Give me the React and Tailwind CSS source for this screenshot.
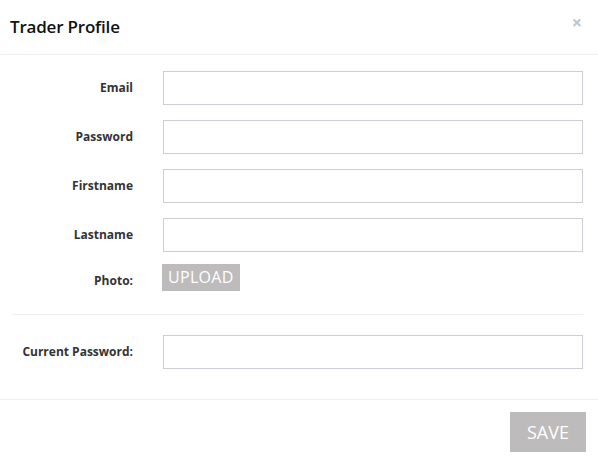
import React from "react";

const font = { fontFamily: '"Open Sans", "Liberation Sans", sans-serif' };

function Row({ label, children, className = "" }) {
  return (
    <div className={"flex items-center " + className}>
      <label className="w-[133px] shrink-0 text-right text-[12px] font-bold text-[#333]">{label}</label>
      <div className="ml-[30px] flex-1">{children}</div>
    </div>
  );
}

function Input({ type = "text" }) {
  return <input type={type} className="block h-[34px] w-full border border-[#cfcdd6] bg-white outline-none" />;
}

export default function App() {
  return (
    <div style={font} className="w-[598px] h-[463px] bg-white overflow-hidden">
      <div className="flex h-[55px] items-start justify-between border-b border-[#eeeeee] pl-[10px] pr-[16px]">
        <h4 className="mt-[14px] text-[17px] font-semibold leading-[26px] text-[#111] tracking-[-0.2px]">Trader Profile</h4>
        <button className="mt-[12px] text-[18px] font-bold leading-[20px] text-[#c4c4c4]">×</button>
      </div>
      <div className="pr-[15px] pt-[16px]">
        <Row label="Email"><Input /></Row>
        <Row label="Password" className="mt-[15px]"><Input type="password" /></Row>
        <Row label="Firstname" className="mt-[15px]"><Input /></Row>
        <Row label="Lastname" className="mt-[15px]"><Input /></Row>
        <div className="mt-[12px] flex items-start">
          <label className="w-[133px] shrink-0 text-right text-[12px] font-bold leading-[34px] text-[#333]">Photo:</label>
          <div className="ml-[29px]">
            <button className="h-[27px] bg-[#bdbbbb] px-[6px] text-[16px] leading-[27px] tracking-[0.3px] text-white">UPLOAD</button>
          </div>
        </div>
        <div className="ml-[13px] mt-[16px] border-t border-[#eeeeee]" />
        <Row label="Current Password:" className="mt-[20px]"><Input type="password" /></Row>
      </div>
      <div className="mt-[30px] flex justify-end border-t border-[#eeeeee] pr-[12px] pt-[12px]">
        <button className="h-[40px] w-[76px] bg-[#bdbbbb] text-[18px] text-white">SAVE</button>
      </div>
    </div>
  );
}
